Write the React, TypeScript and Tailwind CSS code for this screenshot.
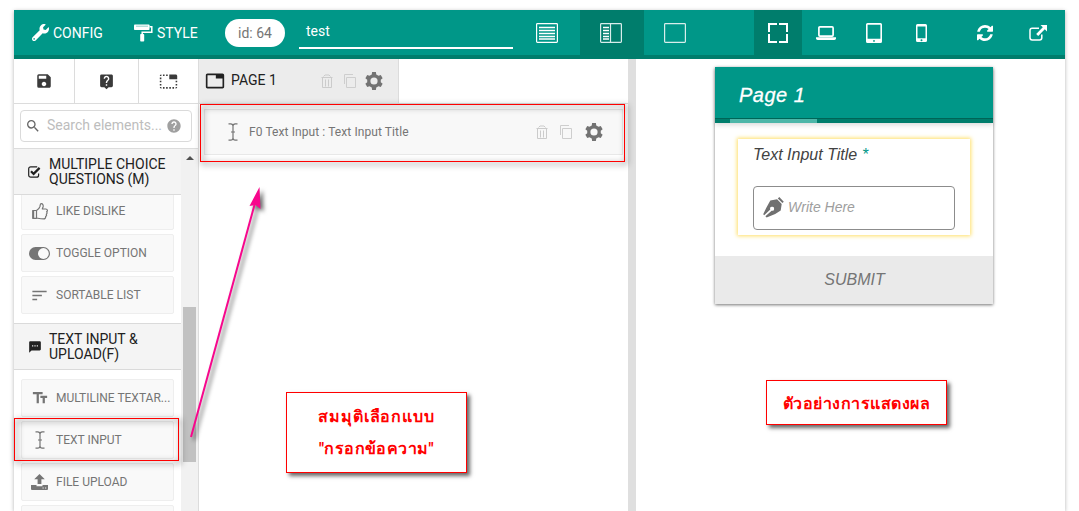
import React from "react";
import { FaWrench } from "react-icons/fa";
import {
  MdSave,
  MdLiveHelp,
  MdTab,
  MdTabUnselected,
  MdSearch,
  MdHelp,
  MdSort,
  MdTextFields,
  MdTextsms,
} from "react-icons/md";

type IconProps = { className?: string };

const RollerIcon = ({ className }: IconProps) => (
  <svg viewBox="0 0 19 18" className={className} fill="none">
    <rect x="0" y="0.5" width="15.5" height="5.5" rx="0.8" fill="#fff" />
    <path d="M2 2.2h12" stroke="#8fd0c9" strokeWidth="1" />
    <path d="M15.5 2.8h2.3v5.4H8.2v3" stroke="#fff" strokeWidth="1.5" />
    <rect x="6.2" y="10" width="4" height="7.6" rx="0.8" fill="#fff" />
  </svg>
);

const LayoutListIcon = ({ className }: IconProps) => (
  <svg viewBox="0 0 22 20" className={className} fill="none" stroke="#fff">
    <rect x="0.6" y="0.6" width="20.8" height="18.8" rx="0.8" strokeWidth="1.2" />
    <path d="M3 4.5h16M3 7.5h16M3 10.5h16M3 13.5h16M3 16h16" strokeWidth="1.4" />
  </svg>
);

const LayoutSplitIcon = ({ className }: IconProps) => (
  <svg viewBox="0 0 22 20" className={className} fill="none" stroke="#d9edeb">
    <rect x="0.6" y="0.6" width="20.8" height="18.8" rx="0.8" strokeWidth="1.2" />
    <path d="M10.5 0.5v19" strokeWidth="1.2" />
    <path d="M3 4.5h6M3 7.5h6M3 10.5h6M3 13.5h6M3 16h6" strokeWidth="1.3" stroke="#fff" />
  </svg>
);

const LayoutBlankIcon = ({ className }: IconProps) => (
  <svg viewBox="0 0 22 20" className={className} fill="none" stroke="#d9edeb">
    <rect x="0.6" y="0.6" width="20.8" height="18.8" rx="0.8" strokeWidth="1.2" />
  </svg>
);

const FullIcon = ({ className }: IconProps) => (
  <svg viewBox="0 0 20 20" className={className} fill="none" stroke="#fff" strokeWidth="2">
    <path d="M1 9V1h8M11 1h8v8M19 11v8h-8M9 19H1v-8" />
  </svg>
);

const LaptopIcon = ({ className }: IconProps) => (
  <svg viewBox="0 0 20 14" className={className}>
    <rect x="2.9" y="0.9" width="14.2" height="9.2" rx="1" fill="none" stroke="#fff" strokeWidth="1.7" />
    <path d="M0 11.3h20v1.2c0 .8-.8 1.4-1.6 1.4H1.6C.8 13.9 0 13.300 0 12.500z" fill="#fff" />
  </svg>
);

const TabletIcon = ({ className }: IconProps) => (
  <svg viewBox="0 0 16 20" className={className}>
    <path
      d="M1.500 0h13A1.500 1.500 0 0 1 16 1.500v17a1.500 1.500 0 0 1-1.500 1.500h-13A1.500 1.500 0 0 1 0 18.500v-17A1.500 1.500 0 0 1 1.500 0zM1.600 1.800v14h12.800v-14zM8 17a.9.9 0 1 0 0 1.800.9.9 0 0 0 0-1.800z"
      fill="#fff"
      fillRule="evenodd"
    />
  </svg>
);

const PhoneIcon = ({ className }: IconProps) => (
  <svg viewBox="0 0 11 18" className={className}>
    <path
      d="M1.500 0h8A1.500 1.500 0 0 1 11 1.500v15A1.500 1.500 0 0 1 9.500 18h-8A1.500 1.500 0 0 1 0 16.500v-15A1.500 1.500 0 0 1 1.500 0zM1.500 2.500v11.800h8V2.500zM5.500 15.200a1 1 0 1 0 0 2 1 1 0 0 0 0-2z"
      fill="#fff"
      fillRule="evenodd"
    />
  </svg>
);

const RefreshIcon = ({ className }: IconProps) => (
  <svg viewBox="0 0 1536 1536" className={className} fill="#fff">
    <path d="M1511 928q0 5-1 7-64 268-268 434.500T764 1536q-146 0-282.500-55T238 1324l-129 129q-19 19-45 19t-45-19-19-45V960q0-26 19-45t45-19h448q26 0 45 19t19 45-19 45l-137 137q71 66 161 102t187 36q134 0 250-65t186-179q11-17 53-117 8-23 30-23h192q13 0 22.500 9.500t9.500 22.500zm25-800v448q0 26-19 45t-45 19h-448q-26 0-45-19t-19-45 19-45l138-138Q969 256 768 256q-134 0-250 65T332 500q-11 17-53 117-8 23-30 23H50q-13 0-22.500-9.500T18 608v-7q65-268 270-434.500T768 0q146 0 284 55.500T1297 212l130-129q19-19 45-19t45 19 19 45z" />
  </svg>
);

const ExternalIcon = ({ className }: IconProps) => (
  <svg viewBox="0 0 18 16" className={className} fill="none">
    <path d="M10 3.200H3.200A2.200 2.200 0 0 0 1 5.400v7.400A2.200 2.200 0 0 0 3.200 15h7.400a2.200 2.200 0 0 0 2.200-2.200V9.500" stroke="#fff" strokeWidth="1.500" />
    <path d="M11.500 0H18v6.500l-2.200-2.200-6.600 6.600-2-2 6.600-6.600z" fill="#fff" />
  </svg>
);

const gearOutline = Array.from({ length: 6 }, (_, tooth) =>
  [
    [-19, 6.9],
    [-12, 9.1],
    [12, 9.1],
    [19, 6.9],
  ].map(([offset, radius]) => {
    const a = ((tooth * 60 + offset - 90) * Math.PI) / 180;
    return `${(10 + radius * Math.cos(a)).toFixed(2)} ${(10 + radius * Math.sin(a)).toFixed(2)}`;
  }),
)
  .flat()
  .join("L");

const GearIcon = ({ className }: IconProps) => (
  <svg viewBox="0 0 20 20" className={className}>
    <path
      d={`M${gearOutline}ZM10 6.400a3.600 3.600 0 1 0 0 7.200 3.600 3.600 0 0 0 0-7.200z`}
      fill="#737373"
      fillRule="evenodd"
    />
  </svg>
);

const TrashIcon = ({ className }: IconProps) => (
  <svg viewBox="0 0 12 15" className={className} fill="none" stroke="#cbcbcb">
    <path d="M0.500 3.500h11M2.500 2.500L4 1h4l1.500 1.500M1.500 4v9.500h9V4M4.500 5.500v7M7.500 5.500v7" />
  </svg>
);

const CopyIcon = ({ className }: IconProps) => (
  <svg viewBox="0 0 12 14" className={className} fill="none" stroke="#cecece">
    <path d="M0.500 10V.5h8.500M2.500 3.500h9v10h-9z" />
  </svg>
);

const CursorIcon = ({ className }: IconProps) => (
  <svg viewBox="0 0 10 18" className={className} fill="none" stroke="#757575" strokeWidth="1.200">
    <path d="M.5.8h2.200Q5 1 5 3v12q0 2-2.300 2.200H.5M9.500.8H7.300Q5 1 5 3v12q0 2 2.300 2.200h2.200M3 9h4" />
  </svg>
);

const CheckIcon = ({ className }: IconProps) => (
  <svg viewBox="0 0 13 12" className={className} fill="none" stroke="#212121">
    <path d="M10.600 7.500v1.700a2 2 0 0 1-2 2H2.700a2 2 0 0 1-2-2V2.800a2 2 0 0 1 2-2h6.500" strokeWidth="1.200" />
    <path d="M3 5.200l2.600 2.700 6-6" strokeWidth="2.200" />
  </svg>
);

const ThumbIcon = ({ className }: IconProps) => (
  <svg viewBox="0 0 16 17" className={className} fill="none" stroke="#757575" strokeWidth="1.200" strokeLinejoin="round">
    <path d="M.7 7.500h3.800v7.800H.7z" />
    <path d="M1 8h1.200v7H1z" fill="#757575" stroke="none" />
    <path d="M4.500 7.500c2-1.100 3-2.300 3.400-3.800.2-1.400.4-3 1.300-3 1.800 0 2.200 1.700 1.900 3L10.300 6h3.500c1.900 0 2 2.200.8 2.800.9.900.4 2-.3 2.400.5 1-.1 2-.7 2.300.3 1.500-.6 2.400-2 2.400-2.800 0-4.400-.4-7.100-.9" />
  </svg>
);

const ToggleIcon = ({ className }: IconProps) => (
  <svg viewBox="0 0 21 13" className={className}>
    <rect width="21" height="13" rx="6.500" fill="#757575" />
    <circle cx="14.400" cy="6.500" r="5.400" fill="#fafafa" />
  </svg>
);

const UploadIcon = ({ className }: IconProps) => (
  <svg viewBox="0 0 17 16" className={className} fill="#757575">
    <path d="M8.500 0l5.300 5.200h-3.400v4.700H6.600V5.200H3.200z" />
    <path d="M0 11h5.500v1.200h6V11H17v4a1 1 0 0 1-1 1H1a1 1 0 0 1-1-1z" />
    <path d="M11.500 13.500h1.200v1h-1.200zM14 13.500h1.200v1H14z" fill="#eee" />
  </svg>
);

const NibIcon = ({ className }: IconProps) => (
  <svg viewBox="0 0 21 21" className={className} fill="#707070">
    <path d="M14.800 1.400l1.500-1.300 4.500 4.600-1.400 1.300z" />
    <path d="M7.300 3.600l6.800-1.300 4.600 4.700-1 6.500-5.500 3.400-8.600 3.600-1.200-1.200 6.200-5.600a2 2 0 1 0-1.300-1.200L1.200 18.300.2 17.200 3.200 11z" />
  </svg>
);

const HeaderButton = ({ icon, label, className }: { icon: React.ReactNode; label: string; className: string }) => (
  <button className={`flex h-[45px] items-center text-[14px] text-white ${className}`}>
    {icon}
    <span className="leading-5">{label}</span>
  </button>
);

const GroupHeader = ({ icon, lines, className }: { icon: React.ReactNode; lines: string[]; className: string }) => (
  <div className={`flex shrink-0 items-center border-b border-[#dadada] bg-[#f4f4f4] pl-[14px] text-[14px] leading-[15px] text-[#212121] ${className}`}>
    <span className="flex w-[21px]">{icon}</span>
    <div>
      {lines.map((l) => (
        <div key={l}>{l}</div>
      ))}
    </div>
  </div>
);

const ElementItem = ({ icon, label }: { icon?: React.ReactNode; label?: string }) => (
  <div className="mx-[7px] flex h-[38px] w-[153px] shrink-0 items-center rounded-xs border border-[#eee] bg-[#f9f9f9] text-[12px] text-[#757575]">
    <span className="flex w-[34px] shrink-0 justify-center pl-px">{icon}</span>
    <span className="whitespace-nowrap">{label}</span>
  </div>
);

function Toolbar() {
  return (
    <header className="flex h-[49px] shrink-0 border-b-4 border-[#007d6c] bg-[#009788]">
      <HeaderButton className="w-[120px] pl-[18px]" icon={<FaWrench className="mr-1 size-[17px]" />} label="CONFIG" />
      <HeaderButton className="w-[91px]" icon={<RollerIcon className="mr-1 h-[18px] w-[19px]" />} label="STYLE" />
      <div className="mt-[9px] flex h-7 w-[60px] items-center justify-center rounded-full bg-white text-[14px] text-[#757575]">id: 64</div>
      <div className="ml-[14px] mt-[7px] h-8 w-[214px] border-b-2 border-white pl-[7px] pt-1 text-[14px] leading-5 text-white">test</div>
      <div className="ml-[3px] flex">
        <div className="flex w-16 items-center justify-center pr-[2px]"><LayoutListIcon className="h-5 w-[22px]" /></div>
        <div className="flex w-16 items-center justify-center bg-[#007d6c] pr-[2px]"><LayoutSplitIcon className="h-5 w-[22px]" /></div>
        <div className="flex w-16 items-center justify-center pr-[2px]"><LayoutBlankIcon className="h-5 w-[22px]" /></div>
      </div>
      <div className="ml-auto flex">
        <div className="flex w-12 items-center justify-center bg-[#007d6c]"><FullIcon className="h-5 w-5" /></div>
        <div className="flex w-12 items-center justify-center"><LaptopIcon className="h-[14px] w-5" /></div>
        <div className="flex w-12 items-center justify-center pr-px"><TabletIcon className="h-5 w-4" /></div>
        <div className="flex w-12 items-center justify-center pr-px"><PhoneIcon className="h-[18px] w-[11px]" /></div>
        <div className="flex w-[79px] items-center justify-center pr-px"><RefreshIcon className="size-4" /></div>
        <div className="flex w-10 items-center pl-[4px]"><ExternalIcon className="h-4 w-[18px]" /></div>
      </div>
    </header>
  );
}

function Sidebar() {
  return (
    <aside className="flex w-[185px] shrink-0 flex-col border-r border-[#dcdcdc] bg-white">
      <div className="flex h-[45px] shrink-0 border-b border-[#dcdcdc] text-[#3a3a3a]">
        <div className="flex w-[61px] items-center justify-center border-r border-[#dcdcdc]"><MdSave className="size-[18px]" /></div>
        <div className="flex w-16 items-center justify-center border-r border-[#dcdcdc]"><MdLiveHelp className="size-[17px]" /></div>
        <div className="flex flex-1 items-center justify-center"><MdTabUnselected className="size-[19px]" /></div>
      </div>
      <div className="h-[45px] shrink-0 border-b border-[#dcdcdc] pl-[6px] pt-[6px]">
        <div className="flex h-8 w-[172px] items-center rounded border border-[#dadada] text-[14px] text-[#bdbdbd]">
          <MdSearch className="ml-1 mr-[6px] size-4 text-[#666]" />
          <span className="w-[119px] whitespace-nowrap pb-px">Search elements...</span>
          <MdHelp className="size-4 text-[#a0a0a0]" />
        </div>
      </div>
      <div className="flex min-h-0 flex-1">
        <div className="flex w-[167px] flex-col overflow-hidden">
          <GroupHeader className="h-[46px]" icon={<CheckIcon className="h-3 w-[13px]" />} lines={["MULTIPLE CHOICE", "QUESTIONS (M)"]} />
          <div className="flex h-[35px] shrink-0 flex-col justify-end overflow-hidden">
            <ElementItem icon={<ThumbIcon className="h-[17px] w-4" />} label="LIKE DISLIKE" />
          </div>
          <div className="mt-1 flex shrink-0 flex-col gap-1">
            <ElementItem icon={<ToggleIcon className="h-[13px] w-[21px]" />} label="TOGGLE OPTION" />
            <ElementItem icon={<MdSort className="size-[19px]" />} label="SORTABLE LIST" />
          </div>
          <GroupHeader className="mt-[9px] h-[47px] border-t" icon={<MdTextsms className="size-[14px]" />} lines={["TEXT INPUT &", "UPLOAD(F)"]} />
          <div className="mt-[9px] flex shrink-0 flex-col gap-1">
            <ElementItem icon={<MdTextFields className="size-[18px]" />} label="MULTILINE TEXTAR..." />
            <ElementItem icon={<CursorIcon className="h-[18px] w-[10px]" />} label="TEXT INPUT" />
            <ElementItem icon={<UploadIcon className="h-4 w-[17px]" />} label="FILE UPLOAD" />
            <ElementItem />
          </div>
        </div>
        <div className="flex w-[17px] flex-col items-center bg-[#f1f1f1] pt-[7px]">
          <svg viewBox="0 0 8 4" className="h-1 w-2 shrink-0"><path d="M0 4l4-4 4 4z" fill="#505050" /></svg>
          <div className="mt-[147px] h-[155px] w-[13px] shrink-0 bg-[#c1c1c1]" />
        </div>
      </div>
    </aside>
  );
}

function Canvas() {
  return (
    <main className="flex w-[429px] shrink-0 flex-col">
      <div className="h-[45px] shrink-0 border-b border-[#dcdcdc]">
        <div className="flex h-11 w-[200px] items-center border-r border-[#dcdcdc] bg-[#ececec] pl-[6px] text-[14px] text-[#212121]">
          <MdTab className="mr-[6px] size-5" />
          <span className="w-[90px] pb-px">PAGE 1</span>
          <TrashIcon className="h-[15px] w-3" />
          <CopyIcon className="ml-[11px] h-[14px] w-3" />
          <GearIcon className="mb-px ml-[8px] size-5" />
        </div>
      </div>
      <div className="ml-[5px] mt-[5px] flex h-[46px] w-[419px] shrink-0 items-center border border-[#e8e8e8] bg-[#f8f8f8] pl-[23px] text-[12px] text-[#757575]">
        <CursorIcon className="mr-[11px] h-[18px] w-[10px]" />
        <span className="w-[287px] tracking-[0.09px]">F0 Text Input : Text Input Title</span>
        <TrashIcon className="h-[15px] w-3" />
        <CopyIcon className="ml-3 h-[14px] w-3" />
        <GearIcon className="ml-3 size-5" />
      </div>
    </main>
  );
}

function Preview() {
  return (
    <section className="flex-1 pl-[79px] pt-2 font-['Liberation_Sans',Arial,sans-serif] italic">
      <div className="flex h-[237px] w-[278px] flex-col bg-white shadow-[0_1px_3px_rgba(0,0,0,0.55)]">
        <div className="h-[56px] shrink-0 bg-[#009788] shadow-[0_2px_5px_rgba(0,0,0,0.15)]">
          <div className="flex h-[51px] items-center pl-6 pt-[5px] text-[20px] tracking-[0.5px] text-white [-webkit-text-stroke:0.3px_white]">Page 1</div>
          <div className="h-[5px] border-t border-[#006557] bg-[#007d6c] pl-[15px]">
            <div className="h-1 w-[87px] bg-[#4db6a8]" />
          </div>
        </div>
        <div className="h-[133px] shrink-0 px-[23px] pt-4">
          <div className="h-24 w-[232px] bg-white pl-[15px] pt-[6px] shadow-[0_0_4px_1px_#ffdf66]">
            <div className="h-[41px] text-[16px] leading-5 text-[#424242]">
              <span className="inline-block w-[109px] whitespace-nowrap">Text Input Title</span>
              <span className="text-[#009788]">*</span>
            </div>
            <div className="flex h-11 w-[202px] items-center rounded border border-[#8c8c8c] pl-[9px] text-[14px] text-[#9e9e9e]">
              <NibIcon className="mb-[2px] mr-1 h-[21px] w-[21px]" />
              <span className="pb-px">Write Here</span>
            </div>
          </div>
        </div>
        <div className="flex h-12 items-center justify-center bg-[#eaeaea] pl-px text-[16px] text-[#757575]">SUBMIT</div>
      </div>
    </section>
  );
}

export default function App() {
  return (
    <div className="relative h-[511px] w-[1079px] overflow-hidden bg-white pl-[14px] pt-[10px] font-['Roboto',sans-serif]">
      <div className="flex h-[501px] w-[1051px] flex-col bg-white shadow-[0_1px_4px_rgba(0,0,0,0.3)]">
        <Toolbar />
        <div className="flex min-h-0 flex-1">
          <Sidebar />
          <Canvas />
          <div className="w-2 shrink-0 bg-[#dfdfdf]" />
          <Preview />
        </div>
      </div>

      <div className="absolute left-[200px] top-[104px] h-[58px] w-[425px] border border-[#ff0000] drop-shadow-[2px_2px_3px_rgba(0,0,0,0.9)]" />
      <div className="absolute left-[14px] top-[418px] h-[43px] w-[165px] border border-[#ff0000] drop-shadow-[2px_2px_3px_rgba(0,0,0,0.9)]" />
      <svg className="absolute left-[180px] top-[170px] h-[280px] w-[95px] drop-shadow-[3px_3px_2px_rgba(0,0,0,0.6)]" viewBox="180 170 95 280">
        <path d="M191 437L255 203" stroke="#f7078c" strokeWidth="2" fill="none" />
        <path d="M259.500 187l1 22-5-4-6 1z" fill="#f7078c" />
      </svg>
      <div className="absolute left-[286px] top-[392px] flex h-[81px] w-[181px] flex-col items-center justify-center border border-[#ff0000] bg-white text-[16px] font-bold leading-8 text-[#ff0000] shadow-[3px_3px_4px_rgba(0,0,0,0.6)]">
        <span className="tracking-[0.95px]">สมมุติเลือกแบบ</span>
        <span className="tracking-[0.4px]">"กรอกข้อความ"</span>
      </div>
      <div className="absolute left-[766px] top-[380px] flex h-[45px] w-[181px] items-center justify-center border border-[#ff0000] bg-white text-[16px] font-bold text-[#ff0000] shadow-[3px_3px_4px_rgba(0,0,0,0.6)]">
        <span className="pt-[2px] tracking-[0.5px]">ตัวอย่างการแสดงผล</span>
      </div>
    </div>
  );
}
